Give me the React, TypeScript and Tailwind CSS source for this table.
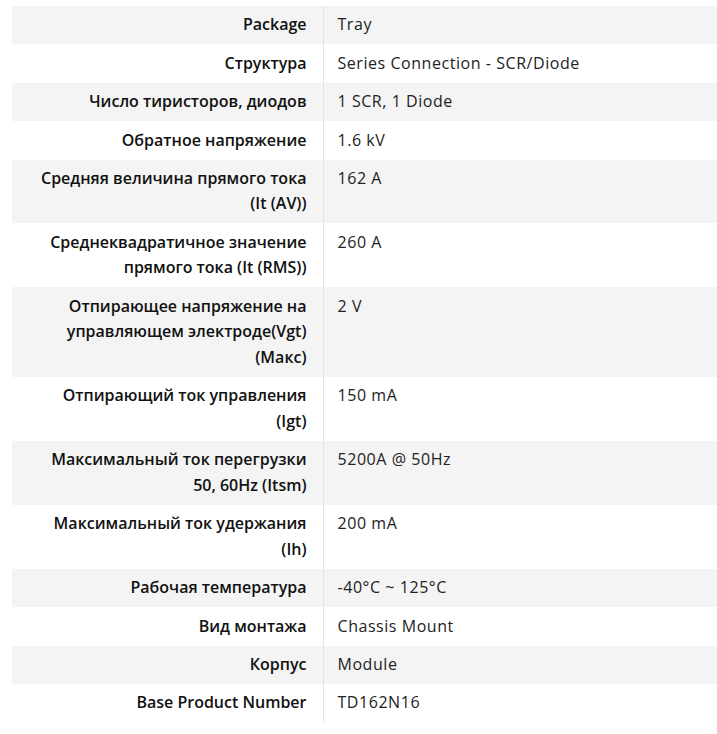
const rows: [string, string][] = [
  ["Package", "Tray"],
  ["Структура", "Series Connection - SCR/Diode"],
  ["Число тиристоров, диодов", "1 SCR, 1 Diode"],
  ["Обратное напряжение", "1.6 kV"],
  ["Средняя величина прямого тока (It (AV))", "162 A"],
  ["Среднеквадратичное значение прямого тока (It (RMS))", "260 A"],
  ["Отпирающее напряжение на управляющем электроде(Vgt) (Макс)", "2 V"],
  ["Отпирающий ток управления (Igt)", "150 mA"],
  ["Максимальный ток перегрузки 50, 60Hz (Itsm)", "5200A @ 50Hz"],
  ["Максимальный ток удержания (Ih)", "200 mA"],
  ["Рабочая температура", "-40°C ~ 125°C"],
  ["Вид монтажа", "Chassis Mount"],
  ["Корпус", "Module"],
  ["Base Product Number", "TD162N16"],
]

export default function App() {
  return (
    <div className="bg-white pt-[6px] pl-[12px] min-h-[734px] overflow-hidden" style={{ fontFamily: '"Open Sans", "Noto Sans", sans-serif' }}>
      <table className="w-[705px] border-collapse text-[16px] leading-[25.6px]">
        <tbody>
          {rows.map(([label, value], i) => (
            <tr key={label} className={i % 2 === 0 ? "bg-[#f4f4f4]" : "bg-white"}>
              <td className="w-[311px] border-r border-[#e4e4e4] pl-5 pr-4 py-[6.4px] text-right align-top font-semibold text-[#111]">
                {label}
              </td>
              <td className="pl-[14px] pr-4 py-[6.4px] align-top text-[#222] tracking-[0.55px]">{value}</td>
            </tr>
          ))}
        </tbody>
      </table>
    </div>
  )
}
